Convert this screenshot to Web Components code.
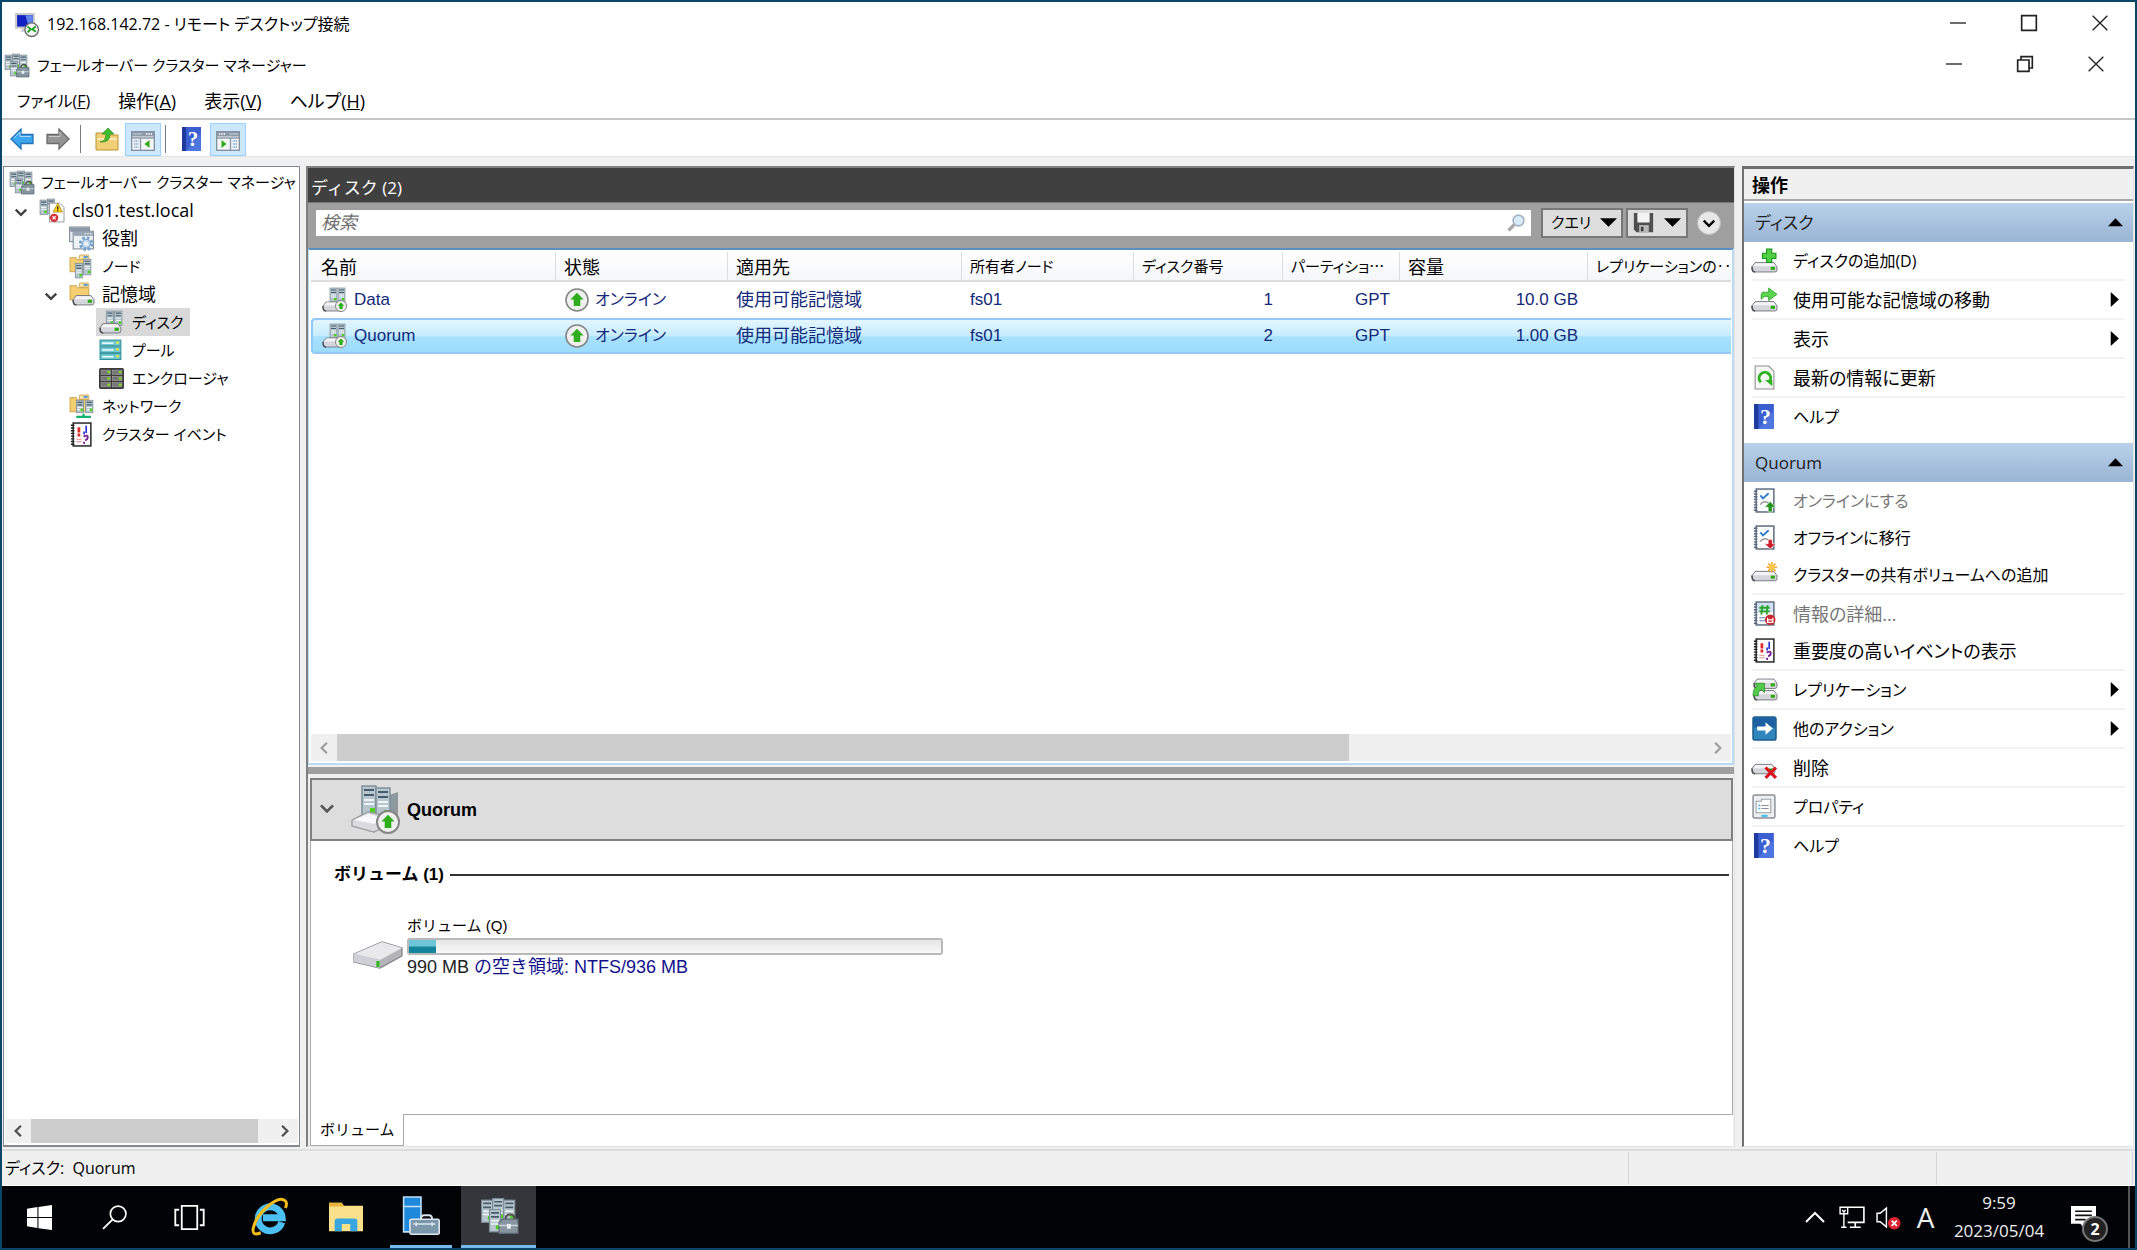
<!DOCTYPE html>
<html lang="ja">
<head>
<meta charset="utf-8">
<title>フェールオーバー クラスター マネージャー</title>
<style>
  body {
    margin: 0;
    background: #0b4668;
    color: #000;
    font: 18px/24px "Open Sans", "Noto Sans CJK JP", sans-serif;
    font-feature-settings: "palt";
  }
</style>
</head>
<body>
<remote-window>
  <title-bar icon="rdp">192.168.142.72 - リモート デスクトップ接続</title-bar>
  <title-bar icon="cluster" inner>フェールオーバー クラスター マネージャー</title-bar>
  <menu-strip></menu-strip>
  <tool-strip></tool-strip>
  <console-body>
    <console-tree slot="tree">
      <tree-node icon="cluster" level="0" kana>フェールオーバー クラスター マネージャ</tree-node>
      <tree-node icon="clusterwarn" level="1" open>cls01.test.local</tree-node>
      <tree-node icon="roles" level="2">役割</tree-node>
      <tree-node icon="nodes" level="2" kana>ノード</tree-node>
      <tree-node icon="storage" level="2" open>記憶域</tree-node>
      <tree-node icon="disks" level="3" kana selected>ディスク</tree-node>
      <tree-node icon="pool" level="3" kana>プール</tree-node>
      <tree-node icon="enclosure" level="3" kana>エンクロージャ</tree-node>
      <tree-node icon="network" level="2" kana>ネットワーク</tree-node>
      <tree-node icon="events" level="2" kana>クラスター イベント</tree-node>
    </console-tree>
    <disk-panel slot="center">
      <disk-list></disk-list>
      <disk-details></disk-details>
    </disk-panel>
    <actions-pane slot="actions">
      <action-group heading="ディスク">
        <action-item icon="diskadd" line kana>ディスクの追加(D)</action-item>
        <action-item icon="diskmove" line more>使用可能な記憶域の移動</action-item>
        <action-item line more>表示</action-item>
        <action-item icon="refresh" line>最新の情報に更新</action-item>
        <action-item icon="help" kana>ヘルプ</action-item>
      </action-group>
      <action-group heading="Quorum">
        <action-item icon="online" disabled kana>オンラインにする</action-item>
        <action-item icon="offline" kana>オフラインに移行</action-item>
        <action-item icon="disknew" line kana>クラスターの共有ボリュームへの追加</action-item>
        <action-item icon="info" disabled>情報の詳細...</action-item>
        <action-item icon="events" line>重要度の高いイベントの表示</action-item>
        <action-item icon="replica" line more kana>レプリケーション</action-item>
        <action-item icon="more" line more kana>他のアクション</action-item>
        <action-item icon="diskdel" line>削除</action-item>
        <action-item icon="props" line kana>プロパティ</action-item>
        <action-item icon="help" kana>ヘルプ</action-item>
      </action-group>
    </actions-pane>
  </console-body>
  <status-strip>ディスク:&nbsp; Quorum</status-strip>
  <task-bar></task-bar>
</remote-window>

<script>
/* ---------- icons, all on a 24 x 24 grid ---------- */
const tower = (x, y, h) => `
  <rect x="${x}" y="${y}" width="7" height="${h}" fill="#b7c6ce" stroke="#7d8c96" stroke-width=".7"/>
  <path d="M${x + 1} ${y + 2}h5M${x + 1} ${y + 4.5}h5" stroke="#465c6b" stroke-width="1.1"/>
  <path d="M${x + 1} ${y + 7}h5M${x + 1} ${y + 9}h5" stroke="#eef4f7" stroke-width="1"/>
  <rect x="${x + 4}" y="${y + h - 4}" width="2.4" height="2.4" fill="#4bd018"/>`;

const drive = (x, y, w) => `
  <path d="M${x} ${y + 4}l3-4h${w - 6}l3 4v3q0 2-2 2h${4 - w}q-2 0-2-2z" fill="#d5d5dc" stroke="#75757d" stroke-width=".9"/>
  <path d="M${x + 1} ${y + 3.6}l2.5-3h${w - 7}l2.5 3z" fill="#f4f4f8"/>
  <path d="M${x} ${y + 4}q0 5 3 5" fill="none" stroke="#4d4d55" stroke-width="1.4"/>
  <rect x="${x + w - 6}" y="${y + 4}" width="4" height="3" fill="#2faa14"/>`;

const folder = `
  <path d="M1 3.500h6l1 2h11V17H1z" fill="#f4cf72" stroke="#c89b3c" stroke-width=".8"/>
  <rect x="10" y="1" width="9" height="4" rx="1" fill="#fbe6ae" stroke="#c89b3c" stroke-width=".8"/>
  <rect x="14" y="2" width="4" height="1.600" fill="#3f90d8"/>`;

const notebook = (edge) => `
  <rect x="4" y="1" width="17" height="22" fill="#fff" stroke="${edge}" stroke-width="1.400"/>
  <path d="M3.500 2.500v19.500" stroke="${edge}" stroke-width="3.400" stroke-dasharray="1.300 1.300"/>`;

const upBadge = (cx, cy, r) => `
  <circle cx="${cx}" cy="${cy}" r="${r}" fill="#f0f0f0" stroke="#858585" stroke-width="${r > 8 ? 1.6 : 1}"/>
  <path d="M${cx} ${cy - r * .65}l${r * .6} ${r * .6}h-${r * .3}v${r * .6}h-${r * .6}v-${r * .6}h-${r * .3}z" fill="#2fae1b"/>`;

const toolbox = `
  <path d="M16 15q0-4 3-4t3 4" fill="none" stroke="#555" stroke-width="1.400"/>
  <path d="M12 16l2-2h10v9H12z" fill="#8596a1" stroke="#5a6973" stroke-width=".7"/>
  <path d="M12 18h12" stroke="#c5d0d7"/><rect x="17" y="17" width="2.500" height="3" fill="#e8eef1"/>`;

const panel = (flip) => `
  <g ${flip ? 'transform="matrix(-1 0 0 1 24 0)"' : ''}>
  <rect x=".7" y="4.700" width="22.600" height="18.600" fill="#f4f6f8" stroke="#7a8694" stroke-width="1.200"/>
  <path d="M1 5h22v4.500H1z" fill="#8d99a8"/><path d="M2 7h9" stroke="#c7d0da"/>
  <path d="M15 7h6" stroke="#fff" stroke-width="1.600" stroke-dasharray="1.400 1"/>
  <path d="M1 11h22M9.500 11v12" stroke="#8d99a8" stroke-width="1.400"/>
  <path d="M3 14h4.500M3 17h4.500M3 20h4.500" stroke="#3b7fc9" stroke-width="1.200" stroke-dasharray="1.500 .6"/>
  <path d="M18.500 13v8l-5-4z" fill="#31a817"/></g>`;

const ICONS = {
  rdp: `<rect x="2" y="2" width="17" height="13" fill="#1022c4" stroke="#c9c9c9" stroke-width="2"/>
    <path d="M11 3h7v11h-4z" fill="#5f86ee"/><path d="M6 19h8l-2-3H8z" fill="#c9c9c9"/>
    <circle cx="17" cy="17" r="6.500" fill="#f4f4f4" stroke="#707070" stroke-width="1.300"/>
    <path d="M13 14l3 2.500-3 3M21 14l-3.500 2.500L21 19" fill="none" stroke="#18a11b" stroke-width="1.700"/>`,
  cluster: tower(1, 2, 14) + tower(8, 1, 14) + tower(15, 2, 13) + tower(6, 8, 14) + toolbox,
  clusterwarn: tower(1, 2, 14) + tower(8, 1, 14) + `
    <path d="M10 5h10l4 4v14H10z" fill="#fff" stroke="#888" stroke-width=".8"/>
    <path d="M18 5l4.500 8.500h-9z" fill="#ffcf1c" stroke="#a88200" stroke-width=".7"/>
    <path d="M18 8v3M18 11.800v1" stroke="#222" stroke-width="1.200"/>
    <circle cx="14.500" cy="19" r="4" fill="#d32f35"/><path d="M13 17.500l3 3M16 17.500l-3 3" stroke="#fff" stroke-width="1.200"/>`,
  roles: `<rect x=".6" y="1" width="19" height="14" fill="#e6ebf0" stroke="#7c8896"/><path d="M1 1.500h18.500v4H1z" fill="#8d99a8"/>
    <rect x="4" y="5" width="19.400" height="17" fill="#eef2f6" stroke="#7c8896"/><path d="M4 5.500h19v4H4z" fill="#9aa6b4"/>
    <path d="M15 7.500h7" stroke="#fff" stroke-dasharray="1.500 1"/>
    <circle cx="16.500" cy="17" r="5.500" fill="none" stroke="#77a3cc" stroke-width="3" stroke-dasharray="2.500 1.800"/>
    <circle cx="16.500" cy="17" r="4" fill="#c8def0" stroke="#77a3cc"/><circle cx="16.500" cy="17" r="1.500" fill="#fff"/>`,
  nodes: folder + tower(6, 9, 14) + tower(14, 5, 15),
  storage: folder + drive(4, 13, 20),
  disks: tower(7, 1, 14) + tower(15, 1, 14) + drive(1, 13, 20),
  pool: [2, 8.5, 15].map((y) => `<rect x="1" y="${y}" width="20" height="5.600" fill="#6fc7cf" stroke="#2f9099"/>
    <path d="M3 ${y + 3}h11" stroke="#e8fbfd" stroke-width="1.500"/><rect x="16.500" y="${y + 1.5}" width="2.500" height="2" fill="#f6e93a"/>`).join(''),
  enclosure: `<rect y="2" width="24" height="20" rx="1.500" fill="#3c3c3c"/>` +
    [2, 13].map((x) => [4, 10, 16].map((y) => `<rect x="${x}" y="${y}" width="9" height="4" fill="#777" stroke="#aaa" stroke-width=".6"/>
    <rect x="${x + 6}" y="${y + 1}" width="2.500" height="2" fill="#7fe01d"/>`).join('')).join(''),
  network: folder + tower(7, 6, 12) + tower(16, 6, 12) + `<path d="M7 22h14M14 19v3" stroke="#12b36a" stroke-width="2.200"/>`,
  events: notebook('#222') + `<path d="M9.500 5v5M9.500 11v3" stroke="#e02a2a" stroke-width="2.600"/><path d="M7 16.500h5M7 19h5" stroke="#e58a8a"/>
    <path d="M14.500 9v3M16.500 3.500v7" stroke="#2a33d8" stroke-width="1.600"/>
    <path d="M14 14q4-2 4 .5t-2.500 3" fill="none" stroke="#7a1c94" stroke-width="1.800"/><path d="M14.500 19v2" stroke="#7a1c94" stroke-width="1.800"/>`,
  diskadd: drive(0, 14, 24) + `<path d="M14 1h5v4h4v5h-4v4h-5v-4h-4V5h4z" fill="#4fd044" stroke="#17921a"/>`,
  diskmove: drive(0, 14, 24) + `<path d="M10 5h6V1l8 6-8 6V9h-3q-3 0-4 3-1-5 1-7z" fill="#5bd44e" stroke="#2c9c2a" stroke-width=".8"/>`,
  disknew: drive(0, 9, 24) + `<path d="M19 0v10M14 5h10M15.500 1.500l7 7M22.500 1.500l-7 7" stroke="#f5a623" stroke-width="1.500"/><circle cx="19" cy="5" r="2.600" fill="#ffc84a"/>`,
  diskdel: drive(0, 9, 22) + `<path d="M13 12l10 10M23 12L13 22" stroke="#d9161c" stroke-width="3"/>`,
  refresh: `<path d="M3 1h13l5 5v17H3z" fill="#f7f7f7" stroke="#8c8c8c"/>
    <path d="M8.500 16.500a5.500 5.500 0 1 1 8.500-1" fill="none" stroke="#2cb31e" stroke-width="2.800"/><path d="M12.500 14.500h7v6z" fill="#2cb31e"/>`,
  help: `<rect x="2" width="19" height="24" fill="#3b5fd0"/><path d="M2 0h4v24H2z" fill="#1d3a9c"/><path d="M6 24L21 6v18z" fill="#4d76e0"/>
    <text x="13" y="19" font-family="Liberation Serif, serif" font-weight="bold" font-size="21" text-anchor="middle" fill="#fff">?</text>`,
  online: notebook('#59677c') + `<path d="M8 7l2.500 3L16 5" fill="none" stroke="#2f7ec9" stroke-width="1.800"/>
    <path d="M8 16q3-5 9-1" fill="none" stroke="#999" stroke-width="1.500"/><path d="M17.500 13l5.500 5.500h-3.500V23h-4v-4.500H12z" fill="#22941c" stroke="#fff" stroke-width=".6"/>`,
  offline: notebook('#59677c') + `<path d="M8 7l2.500 3L16 5" fill="none" stroke="#2f7ec9" stroke-width="1.800"/>
    <path d="M8 16q3-5 9-1" fill="none" stroke="#999" stroke-width="1.500"/><path d="M17.500 23l5.500-5h-3.500v-4h-4v4H12z" fill="#cc1f2b" stroke="#fff" stroke-width=".6"/>`,
  info: notebook('#59677c') + `<path d="M5 2h15v9H5z" fill="#cfe0f4"/><path d="M10 4l-1 9M15 4l-1 9M7 6.500h10M7 10h10" stroke="#2ba52a" stroke-width="1.800"/>
    <path d="M7 16h6M7 19h6" stroke="#5a83b8"/><circle cx="17.500" cy="18" r="5" fill="#c8252f"/><path d="M15 16v4.500h5V16M15 18.200h5" stroke="#fff" fill="none" stroke-width="1.200"/>`,
  replica: drive(2, 2, 22) + drive(2, 13, 22) + `<path d="M1 18q0-8 4-9L3 6h9v9l-3-3q-3 1-3 6z" fill="#55c94a" stroke="#1f8d1f" stroke-width=".7"/>`,
  more: `<rect x="1" y="1" width="22" height="22" rx="2" fill="#2f86bd" stroke="#1c5c8c" stroke-width="1.500"/>
    <path d="M2 2h20v9H2z" fill="#1c5fa2"/><path d="M5 10h8V6l7 6-7 6v-4H5z" fill="#fff"/>`,
  props: `<rect x="1" y="1" width="21" height="22" rx="1.500" fill="#eceef1" stroke="#8b9097" stroke-width="1.400"/>
    <path d="M4 7h5V5h9v13H4z" fill="#fff" stroke="#9aa0a8"/><path d="M6 11h2M6 14h2" stroke="#46b4e8" stroke-width="1.500"/>
    <path d="M9 11h7M9 14h7" stroke="#8b9097"/><path d="M9 21h6" stroke="#46c0e8" stroke-width="2"/>`,
  back: `<path d="M1 12L11 2v5.500h12v9H11V22z" fill="#3ba6ee" stroke="#2472b5" stroke-width="1.300"/><path d="M4 11l6-6v4.500h11" fill="none" stroke="#a5dcff"/>`,
  forward: `<path d="M23 12L13 2v5.500H1v9h12V22z" fill="#959595" stroke="#6a6a6a" stroke-width="1.300"/><path d="M3 9.500h11V5" fill="none" stroke="#c9c9c9"/>`,
  up: `<path d="M1 6h9l2 2h11v15H1z" fill="#f1cf76" stroke="#bd9337"/><path d="M2 12h20" stroke="#fbe8b4" stroke-width="2"/>
    <path d="M5 15q6-1 6-8H7l6-6 6 6h-4q0 9-10 8z" fill="#3fbc2f" stroke="#258d1b" stroke-width=".7"/>`,
  showtree: panel(false),
  showactions: panel(true),
  state: upBadge(12, 12, 11),
  diskonline: tower(7, 0, 14) + tower(15, 0, 14) + drive(0, 14, 20) + upBadge(18, 18, 5.5),
  diskbig: `<path d="M17 5l6-2v15h-6z" fill="#8e999f"/>` + tower(5, 0, 15) + tower(12, 1, 15) + `
    <path d="M0 17l8-4 9 2v5l-6 3-11-3z" fill="#dadade" stroke="#98989c" stroke-width=".6"/><path d="M1 17l7-3 8 2-5 3z" fill="#f8f8fa"/>` + upBadge(18, 18, 5.5),
  volume: `<path d="M0 12l14-6 10 3v4l-11 6L0 16z" fill="#b4b4b8" stroke="#808084" stroke-width=".6"/>
    <path d="M0 12l14-6 10 3-11 6z" fill="#e9e9eb"/><path d="M0 12l13 3v4L0 16z" fill="#cfcfd8"/>
    <path d="M12 15.500v3" stroke="#2db818" stroke-width="1.600"/>`,
  zoom: `<path d="M3 21l7-7" stroke="#a9a9a9" stroke-width="4"/><circle cx="15" cy="9" r="6.500" fill="#d8ecfa" stroke="#a7b5c2" stroke-width="2"/>`,
  floppy: `<path d="M1 1h22v22H4l-3-3z" fill="#4f4f4f"/><path d="M5 1h14v11H5z" fill="#f4f4f4"/><path d="M7 15h11v8H7z" fill="#b9b9b9"/><path d="M9 17h3v5H9z" fill="#3c3c3c"/>`,
  win: `<path d="M0 3.500l10-1.500v9.500H0zM11 1.800L24 0v11.500H11zM0 12.500h10V22L0 20.500zM11 12.500h13V24l-13-1.800z" fill="#fff"/>`,
  search: `<circle cx="15.500" cy="8.500" r="7.500" fill="none" stroke="#fff" stroke-width="1.600"/><path d="M10 14L1 23" stroke="#fff" stroke-width="1.800"/>`,
  taskview: `<path d="M6 3h12v18H6zM4 6H1v12h3M20 6h3v12h-3" fill="none" stroke="#fff" stroke-width="1.400"/>`,
  ie: `<path d="M20.500 15.500A8 8 0 1 1 20.800 12.500H8" fill="none" stroke="#4cc0f3" stroke-width="4.600"/>
    <path d="M6.500 22.500q-6 2.500-5-3Q3 12 11 5T22.500 1q2 1 .5 5" fill="none" stroke="#f3bd1c" stroke-width="2"/>`,
  explorer: `<path d="M0 2h9l1.500 2H24v18H0z" fill="#fbe08c"/><path d="M0 2h9l1.500 2.500H0z" fill="#e9b43c"/><path d="M4 22v-7q0-2 2-2h12q2 0 2 2v7h-5v-5H9v5z" fill="#38a6e0"/>`,
  servermgr: `<path d="M1 0h11v22H1z" fill="#1e88dc" stroke="#bfe0f8"/><path d="M1 6h11" stroke="#bfe0f8"/>
    <path d="M12 14q0-2.500 2-2.500h3q2 0 2 2.500" fill="none" stroke="#dde6ec" stroke-width="1.200"/>
    <rect x="5" y="14" width="18.500" height="9.500" rx="1" fill="#7b97ab" stroke="#dde6ec"/><path d="M7 17h14M9 16v2.500M19 16v2.500" stroke="#dde6ec"/>`,
  chevup: `<path d="M3 17l9-9 9 9" fill="none" stroke="#fff" stroke-width="2"/>`,
  lan: `<path d="M8 3h15v14H8M15 17v4M10 21.500h10" fill="none" stroke="#fff" stroke-width="1.500"/><path d="M1 3h7v6H1zM4.500 9v13M3 5.500l1.500 2L6 5.500M2 21.500h5" fill="none" stroke="#fff" stroke-width="1.300"/>`,
  mute: `<path d="M1 8h3l6-5v18l-6-5H1z" fill="none" stroke="#fff" stroke-width="1.400"/><circle cx="17.500" cy="17.500" r="6" fill="#dd2330"/>
    <path d="M15 15l5 5M20 15l-5 5" stroke="#fff" stroke-width="1.600"/>`,
  notes: `<path d="M0 1h24v17H14v6l-5-6H0z" fill="#fff"/><path d="M4 6h16M4 10h16M4 14h10" stroke="#111" stroke-width="1.600"/>`,
  down: `<path d="M3 8l9 9 9-9" fill="none" stroke="currentColor" stroke-width="4"/>`,
  left: `<path d="M17 3l-9 9 9 9" fill="none" stroke="currentColor" stroke-width="4"/>`,
  right: `<path d="M7 3l9 9-9 9" fill="none" stroke="currentColor" stroke-width="4"/>`,
  tridown: `<path d="M0 6h24L12 18z" fill="currentColor"/>`,
  triup: `<path d="M0 18h24L12 5z" fill="currentColor"/>`,
  triright: `<path d="M6 0l13 12L6 24z" fill="currentColor"/>`,
  min: `<path d="M0 12h24" stroke="#222" stroke-width="2"/>`,
  max: `<path d="M1 1h22v22H1z" fill="none" stroke="#222" stroke-width="2.500"/>`,
  restore: `<path d="M1 6h17v17H1zM6 6V1h17v17h-5" fill="none" stroke="#222" stroke-width="2.500"/>`,
  close: `<path d="M1 1l22 22M23 1L1 23" stroke="#222" stroke-width="2"/>`
};

/** Base element: puts the shared reset and its own markup in an open shadow root */
class BaseElement extends HTMLElement {
  connectedCallback() {
    if (this.shadowRoot) return;
    this.attachShadow({mode: 'open'}).innerHTML = `
      <style>
        :host { display: block; box-sizing: border-box; }
        *, *::before { box-sizing: border-box; }
        button, input {
          margin: 0; padding: 0; border: 0; background: none;
          font: inherit; color: inherit; font-feature-settings: inherit; text-align: left; white-space: nowrap;
        }
      </style>` + this.render();
  }
}

/** Square picture, size in pixels */
class UiIcon extends BaseElement {
  render() {
    const size = this.getAttribute('size') || 24;
    return `<style>:host { display: inline-block; flex: none; width: ${size}px; height: ${size}px; } svg { display: block; overflow: visible; }</style>
      <svg width="${size}" height="${size}" viewBox="0 0 24 24" aria-hidden="true">${ICONS[this.getAttribute('name')] || ''}</svg>`;
  }
}

class RemoteWindow extends BaseElement {
  render() {
    return `<style>
        :host { display: flex; flex-direction: column; min-height: 100vh; padding: 2px; background: #0b4668; }
        ::slotted(*) { flex: none; }
        ::slotted(console-body) { flex: 1; }
      </style><slot></slot>`;
  }
}

class TitleBar extends BaseElement {
  render() {
    const inner = this.hasAttribute('inner');
    return `<style>
        :host { display: flex; align-items: center; height: 44px; padding-left: 12px; background: #fff; }
        :host([inner]) { height: 38px; padding: 0 4px 0 2px; }
        .text { flex: 1; padding-left: 8px; font-size: 16px; white-space: nowrap; }
        :host([inner]) .text { font-size: 15px; }
        button { width: 71px; height: 36px; text-align: center; }
      </style>
      <ui-icon name="${this.getAttribute('icon')}" size="25"></ui-icon>
      <span class="text"><slot></slot></span>
      <button aria-label="最小化"><ui-icon name="min" size="16"></ui-icon></button>
      <button aria-label="最大化"><ui-icon name="${inner ? 'restore' : 'max'}" size="16"></ui-icon></button>
      <button aria-label="閉じる"><ui-icon name="close" size="16"></ui-icon></button>`;
  }
}

class MenuStrip extends BaseElement {
  render() {
    const items = [['ファイル', 'F'], ['操作', 'A'], ['表示', 'V'], ['ヘルプ', 'H']];
    return `<style>
        :host { display: flex; height: 36px; padding: 0 1px; background: #fff; border-bottom: 2px solid #c6c6c6; }
        button { padding: 0 14px; }
        button:first-of-type { font-size: 16px; }
      </style>` + items.map(([t, k]) => `<button>${t}(<u>${k}</u>)</button>`).join('');
  }
}

class ToolStrip extends BaseElement {
  render() {
    return `<style>
        :host { display: flex; align-items: center; height: 37px; padding: 2px 2px 0; background: #fff; border-bottom: 1px solid #e3e3e3; }
        button { display: flex; align-items: center; justify-content: center; width: 36px; height: 33px; }
        button[aria-pressed] { background: #cce8ff; border: 1px solid #99d1ff; }
        i { width: 1px; height: 28px; margin: 0 8px 0 4px; background: #7b7b7b; }
      </style>
      <button aria-label="戻る"><ui-icon name="back"></ui-icon></button>
      <button aria-label="進む"><ui-icon name="forward"></ui-icon></button>
      <i></i>
      <button aria-label="上へ"><ui-icon name="up"></ui-icon></button>
      <button aria-label="コンソール ツリー" aria-pressed="true"><ui-icon name="showtree"></ui-icon></button>
      <i></i>
      <button aria-label="ヘルプ"><ui-icon name="help"></ui-icon></button>
      <button aria-label="操作ウィンドウ" aria-pressed="true"><ui-icon name="showactions"></ui-icon></button>`;
  }
}

class ConsoleBody extends BaseElement {
  render() {
    return `<style>
        :host {
          display: grid; grid-template-columns: 297px minmax(0, 1fr) 392px; column-gap: 6px;
          padding: 9px 1px 2px; background: #f0f0f0;
        }
        ::slotted(disk-panel) { margin-right: 1px; }
      </style>
      <slot name="tree"></slot><slot name="center"></slot><slot name="actions"></slot>`;
  }
}

/** Horizontal scroll bar; thumb is given in percent of the track */
class ScrollStrip extends BaseElement {
  render() {
    return `<style>
        :host { display: flex; align-items: stretch; height: 24px; background: #f0f0f0; color: #505050; }
        :host([pale]) { height: 27px; color: #a0a0a0; }
        button { display: flex; align-items: center; justify-content: center; flex: none; width: 26px; }
        .track { flex: 1; }
        .thumb { width: ${this.getAttribute('thumb')}%; height: 100%; background: #cdcdcd; }
      </style>
      <button aria-label="左"><ui-icon name="left" size="14"></ui-icon></button>
      <div class="track"><div class="thumb"></div></div>
      <button aria-label="右"><ui-icon name="right" size="14"></ui-icon></button>`;
  }
}

class ConsoleTree extends BaseElement {
  render() {
    return `<style>
        :host { display: flex; flex-direction: column; min-width: 0; padding: 1px 1px 2px; background: #fff; border: 1px solid #828790; border-width: 1px 1px 2px; }
        .nodes { flex: 1; overflow: hidden; }
      </style>
      <div class="nodes"><slot></slot></div>
      <scroll-strip thumb="94"></scroll-strip>`;
  }
}

class TreeNode extends BaseElement {
  render() {
    const level = +this.getAttribute('level');
    return `<style>
        :host { display: flex; align-items: center; height: 28px; padding-left: ${level ? (level - 1) * 30 + 4 : 0}px; }
        .twisty { width: 26px; padding-left: 5px; color: #404040; flex: none; }
        .node { display: flex; align-items: center; gap: 8px; height: 28px; padding: 0 6px 0 3px; margin-left: 1px; }
        :host([level="0"]) .node { gap: 7px; padding-right: 0; }
        :host([kana]) .node { font-size: 15px; }
        :host([selected]) .node { background: #d9d9d9; }
        ui-icon { vertical-align: middle; }
      </style>
      ${this.hasAttribute('open') ? '<button class="twisty" aria-label="折りたたむ"><ui-icon name="down" size="14"></ui-icon></button>' : level ? '<span class="twisty"></span>' : ''}
      <button class="node"><ui-icon name="${this.getAttribute('icon')}" size="25"></ui-icon><span><slot></slot></span></button>`;
  }
}

class DiskPanel extends BaseElement {
  render() {
    return `<style>
        :host {
          display: flex; flex-direction: column; min-width: 0; background: #f0f0f0;
          border: 2px solid #808080; border-width: 2px 1px 1px 2px; border-right-color: #e3e3e3; border-bottom-color: #e3e3e3;
        }
        ::slotted(disk-details) { flex: 1; }
      </style><slot></slot>`;
  }
}

class DiskList extends BaseElement {
  render() {
    const rows = [['Data', '1', '10.0 GB'], ['Quorum', '2', '1.00 GB']];
    return `<style>
        :host { background: #9f9f9f; font-family: "Liberation Sans", "Noto Sans CJK JP", sans-serif; }
        h2 { margin: 0; height: 35px; padding: 7px 3px; background: #404040; color: #fff; font: 17px/26px "Open Sans", "Noto Sans CJK JP", sans-serif; border-bottom: 1px solid #777; }
        .bar { display: flex; align-items: center; height: 45px; padding: 0 13px 6px 8px; }
        .find { display: flex; flex: 1; align-items: center; height: 26px; padding: 0 5px; background: #fff; margin-right: 10px; }
        input { flex: 1; min-width: 0; outline: 0; font-size: 18px; }
        input::placeholder { color: #6d6d6d; font-style: italic; opacity: 1; }
        .bar button { display: flex; align-items: center; justify-content: space-between; height: 30px; background: #ddd; border: 2px solid #777; font-size: 15px; margin-right: 3px; }
        .query { width: 82px; padding: 0 4px 0 8px; }
        .save { width: 62px; padding: 0 5px; }
        .bar .round { justify-content: center; width: 24px; height: 24px; margin: 0 0 0 6px; border: 1px solid #bbb; border-radius: 12px; background: #e8e8e8; }
        .list { display: flex; flex-direction: column; justify-content: space-between; height: 517px; padding: 2px 1px 2px 2px; background: #fff; border: 2px solid #b9dcf2; border-top-color: #5b8fc0; border-left-width: 1px; }
        table { width: 100%; border-spacing: 0; table-layout: fixed; color: #13297a; }
        th, td { padding: 0 10px 0 8px; font-weight: normal; text-align: left; white-space: nowrap; overflow: hidden; }
        th { height: 30px; padding-right: 0; color: #000; font-family: "Noto Sans CJK JP", sans-serif; font-size: 15px; background: linear-gradient(#fff, #f5f6f8); border-right: 1px solid #ddd; border-bottom: 2px solid #ddd; }
        th.kanji { font-size: 18px; }
        th:first-child { padding-left: 10px; }
        th:last-child { border-right: 0; }
        td { height: 36px; border: 0 solid #93c8f7; font-size: 17px; }
        td:first-child { padding-left: 12px; }
        td.kanji { font-size: 18px; }
        td.num { text-align: right; }
        td > span { display: flex; align-items: center; gap: 7px; }
        td.state { padding-left: 9px; font-size: 16px; }
        td.state > span { gap: 6px; }
        tr.on td { background: linear-gradient(#e3f6ff, #c6ecff 50%, #a8e2ff 52%, #9cdcfb); border-width: 2px 0; }
        tr.on td:first-child { border-left-width: 2px; border-radius: 4px 0 0 4px; padding-left: 10px; }
      </style>
      <h2>ディスク (2)</h2>
      <div class="bar">
        <div class="find"><input type="text" placeholder="検索" aria-label="検索"><ui-icon name="zoom" size="20"></ui-icon></div>
        <button class="query">クエリ<ui-icon name="tridown" size="17"></ui-icon></button>
        <button class="save" aria-label="クエリの保存"><ui-icon name="floppy" size="21"></ui-icon><ui-icon name="tridown" size="17"></ui-icon></button>
        <button class="round" aria-label="展開"><ui-icon name="down" size="14"></ui-icon></button>
      </div>
      <div class="list">
        <table>
          <colgroup><col width="245"><col width="172"><col width="234"><col width="172"><col width="149"><col width="117"><col width="188"><col></colgroup>
          <tr><th class="kanji">名前</th><th class="kanji">状態</th><th class="kanji">適用先</th><th>所有者ノード</th><th>ディスク番号</th><th>パーティショ…</th><th class="kanji">容量</th><th>レプリケーションの‥</th></tr>
          ${rows.map(([name, n, size], i) => `<tr class="${i ? 'on' : ''}">
            <td><span><ui-icon name="diskonline"></ui-icon>${name}</span></td>
            <td class="state"><span><ui-icon name="state"></ui-icon>オンライン</span></td>
            <td class="kanji">使用可能記憶域</td><td>fs01</td><td class="num">${n}</td><td class="num">GPT</td><td class="num">${size}</td><td></td></tr>`).join('')}
        </table>
        <scroll-strip pale thumb="74"></scroll-strip>
      </div>`;
  }
}

class DiskDetails extends BaseElement {
  render() {
    return `<style>
        :host { display: flex; flex-direction: column; padding: 2px 1px 0 2px; font: 18px/24px "Liberation Sans", "Noto Sans CJK JP", sans-serif; background: #f0f0f0; }
        .split { height: 7px; margin: 0 -1px 4px -2px; background: #9f9f9f; }
        header { display: flex; align-items: center; height: 63px; padding: 0 7px; gap: 7px; background: #ddd; border: 2px solid #808080; color: #555; }
        header b { color: #000; }
        header button { width: 26px; }
        .page { flex: 1; padding: 22px 3px 0 23px; background: #fff; border: 1px solid #a9a9a9; border-top: 0; }
        h3 { display: flex; align-items: center; gap: 6px; margin: 0; font-size: 17px; line-height: 24px; white-space: nowrap; }
        h3::after { content: ""; flex: 1; height: 2px; background: #333; }
        .volume { display: grid; grid-template-columns: 48px minmax(0, 536px); column-gap: 5px; padding: 27px 0 0 20px; }
        .volume label, .volume span { grid-column: 2; }
        .volume label { font-size: 15px; line-height: 24px; }
        .volume span { line-height: 22px; color: #222; }
        .volume ui-icon { grid-row: 2 / span 2; margin-top: -8px; }
        em { font-style: normal; color: #11118c; }
        progress { display: block; width: 100%; height: 17px; appearance: none; border: 2px solid #b9b9b9; border-radius: 3px; background: #eee; }
        progress::-webkit-progress-bar { background: linear-gradient(#e6e6e6, #f8f8f8); }
        progress::-webkit-progress-value { background: linear-gradient(#6fc6d8 45%, #12849c 55%); }
        .tabs { display: flex; height: 31px; }
        .tabs button { width: 94px; margin-top: -1px; padding: 0 9px; background: #fff; border: 1px solid #a9a9a9; border-top: 0; font-size: 15px; }
        .tabs div { flex: 1; background: #fff; }
      </style>
      <div class="split"></div>
      <header><button aria-label="折りたたむ"><ui-icon name="down" size="16"></ui-icon></button><ui-icon name="diskbig" size="48"></ui-icon><b>Quorum</b></header>
      <div class="page">
        <h3>ボリューム (1)</h3>
        <div class="volume">
          <label for="q">ボリューム (Q)</label>
          <ui-icon name="volume" size="48"></ui-icon>
          <progress id="q" max="100" value="5"></progress>
          <span>990 MB <em>の空き領域: NTFS/936 MB</em></span>
        </div>
      </div>
      <div class="tabs"><button>ボリューム</button><div></div></div>`;
  }
}

class ActionsPane extends BaseElement {
  render() {
    return `<style>
        :host { min-width: 0; background: #fff; border: 3px solid #6f6f6f; border-width: 3px 1px 1px 2px; border-right-color: #e3e3e3; border-bottom-color: #e3e3e3; }
        h2 { margin: 0 0 2px; height: 32px; padding: 0 8px; background: #f0f0f0; border-bottom: 2px solid #a8a8a8; font-size: 18px; line-height: 32px; }
      </style>
      <h2>操作</h2><slot></slot>`;
  }
}

class ActionGroup extends BaseElement {
  render() {
    return `<style>
        :host { padding-bottom: 8px; }
        .head { display: flex; align-items: center; justify-content: space-between; width: 100%; height: 39px; padding: 0 10px 0 11px; background: linear-gradient(#b9d1ea, #99b4d4); color: #222; font-size: 17px; }
        .head ui-icon { color: #000; }
        ::slotted(*) { margin: 0 8px; }
      </style>
      <button class="head">${this.getAttribute('heading')}<ui-icon name="triup" size="15"></ui-icon></button><slot></slot>`;
  }
}

class ActionItem extends BaseElement {
  render() {
    const icon = this.getAttribute('icon');
    return `<style>
        :host([line]) { border-bottom: 2px solid #f2f2f2; }
        button { display: grid; grid-template-columns: 25px 1fr 16px; gap: 16px; align-items: center; width: 100%; height: 37px; padding-right: 2px; }
        :host([kana]) button { font-size: 16px; }
        button:disabled { color: #777; }
      </style>
      <button ${this.hasAttribute('disabled') ? 'disabled' : ''}>
        <ui-icon name="${icon}" size="25"></ui-icon><span><slot></slot></span>
        ${this.hasAttribute('more') ? '<ui-icon name="triright" size="15"></ui-icon>' : ''}
      </button>`;
  }
}

class StatusStrip extends BaseElement {
  render() {
    return `<style>
        :host { display: grid; grid-template-columns: 1fr 307px 195px 1px; gap: 1px; height: 37px; padding-top: 1px; background: #f0f0f0; border-top: 2px solid #ddd; border-bottom: 1px solid #fff; font-size: 16px; line-height: 33px; }
        div { border-right: 1px solid #d5d5d5; }
        div:first-of-type { padding-left: 3px; }
        div:last-of-type { border: 0; }
      </style><div><slot></slot></div><div></div><div></div><div></div>`;
  }
}

class TaskBar extends BaseElement {
  render() {
    return `<style>
        :host { display: flex; align-items: stretch; height: 62px; background: #010307; color: #fff; }
        button { display: flex; align-items: center; justify-content: center; width: 75px; }
        .apps { display: flex; flex: 1; padding-left: 3px; }
        .apps button { width: 77px; }
        .apps .run { width: 62px; border-bottom: 3px solid #76b9ed; margin: 0 9px 0 6px; }
        .apps .on { width: 75px; margin: 0; background: #34363b; }
        .tray { display: flex; color: #eee; font-size: 28px; }
        .tray button { width: 37px; }
        .tray .clock { display: block; width: 110px; font-size: 17px; line-height: 28px; text-align: center; }
        .notes { position: relative; width: 58px; margin-right: 16px; }
        .notes b { position: absolute; left: 28px; top: 30px; width: 26px; height: 26px; border: 2px solid #777; border-radius: 13px; background: #222; font-size: 16px; line-height: 22px; text-align: center; }
        .peek { width: 7px; border-left: 2px solid #555; }
      </style>
      <button aria-label="スタート"><ui-icon name="win" size="25"></ui-icon></button>
      <button aria-label="検索"><ui-icon name="search" size="25"></ui-icon></button>
      <button aria-label="タスク ビュー"><ui-icon name="taskview" size="31"></ui-icon></button>
      <div class="apps">
        <button aria-label="Internet Explorer"><ui-icon name="ie" size="36"></ui-icon></button>
        <button aria-label="エクスプローラー"><ui-icon name="explorer" size="34"></ui-icon></button>
        <button class="run" aria-label="サーバー マネージャー"><ui-icon name="servermgr" size="38"></ui-icon></button>
        <button class="run on" aria-label="フェールオーバー クラスター マネージャー"><ui-icon name="cluster" size="38"></ui-icon></button>
      </div>
      <div class="tray">
        <button aria-label="隠れているインジケーター"><ui-icon name="chevup" size="24"></ui-icon></button>
        <button aria-label="ネットワーク"><ui-icon name="lan" size="26"></ui-icon></button>
        <button aria-label="音量"><ui-icon name="mute" size="25"></ui-icon></button>
        <button aria-label="入力モード">A</button>
        <button class="clock">9:59<br>2023/05/04</button>
      </div>
      <button class="notes" aria-label="通知"><ui-icon name="notes" size="25"></ui-icon><b>2</b></button>
      <button class="peek" aria-label="デスクトップの表示"></button>`;
  }
}

customElements.define('ui-icon', UiIcon);
customElements.define('remote-window', RemoteWindow);
customElements.define('title-bar', TitleBar);
customElements.define('menu-strip', MenuStrip);
customElements.define('tool-strip', ToolStrip);
customElements.define('console-body', ConsoleBody);
customElements.define('scroll-strip', ScrollStrip);
customElements.define('console-tree', ConsoleTree);
customElements.define('tree-node', TreeNode);
customElements.define('disk-panel', DiskPanel);
customElements.define('disk-list', DiskList);
customElements.define('disk-details', DiskDetails);
customElements.define('actions-pane', ActionsPane);
customElements.define('action-group', ActionGroup);
customElements.define('action-item', ActionItem);
customElements.define('status-strip', StatusStrip);
customElements.define('task-bar', TaskBar);
</script>
</body>
</html>
